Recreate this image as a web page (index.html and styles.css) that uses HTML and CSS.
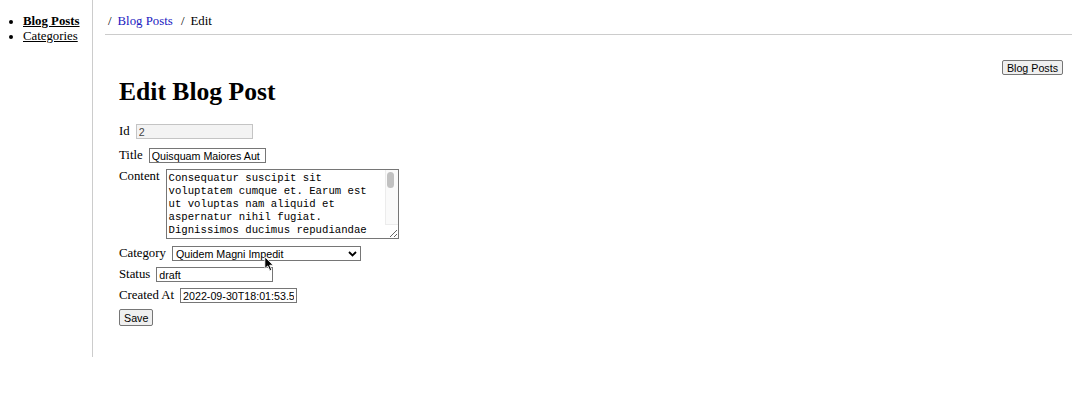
FILE: index.html
```html
<!DOCTYPE html>
<html lang="en">
<head>
    <meta charset="UTF-8">
    <meta name="viewport" content="width=device-width, initial-scale=1.0">
    <title>Edit Blog Post</title>
    <link rel="stylesheet" href="styles.css">
</head>
<body>
    <div class="layout">
        <aside class="sidebar">
            <ul class="nav">
                <li><a href="#" class="active">Blog Posts</a></li>
                <li><a href="#">Categories</a></li>
            </ul>
        </aside>

        <main class="main">
            <nav class="breadcrumb">
                <span class="crumb"><a href="#">Blog Posts</a></span>
                <span class="crumb">Edit</span>
            </nav>

            <div class="content">
                <button type="button" class="btn btn-back">Blog Posts</button>
                <h1>Edit Blog Post</h1>

                <form id="postForm">
                    <div class="field field-id">
                        <label for="id">Id</label><input type="text" id="id" name="id" class="input" value="2" disabled>
                    </div>

                    <div class="field">
                        <label for="title">Title</label><input type="text" id="title" name="title" class="input" value="Quisquam Maiores Aut">
                    </div>

                    <div class="field field-content">
                        <label for="content">Content</label><span class="textarea-wrap">
                            <textarea id="content" name="content" class="textarea">Consequatur suscipit sit voluptatem cumque et. Earum est ut voluptas nam aliquid et aspernatur nihil fugiat. Dignissimos ducimus repudiandae quia ut sequi. Nemo dolorem officiis ut rerum est aut. Voluptas et quo perferendis ipsam. Autem sint harum quasi est dolores in. Qui eos ut eveniet quia molestiae. Deleniti rerum quis vel facere. Sed et beatae quidem sunt omnis dolorem ut. Non aut iusto eius odit voluptatem officia. Repellat tempora eos saepe quaerat. Maxime sed fugit veniam. Labore commodi nisi at eum ratione.</textarea>
                            <span class="scroll-track"><span class="scroll-thumb"></span></span>
                        </span>
                    </div>

                    <div class="field">
                        <label for="category">Category</label><span class="select-wrap">
                            <select id="category" name="category" class="select">
                                <option>Quidem Magni Impedit</option>
                                <option>Voluptas Et Quo</option>
                            </select>
                            <svg class="chevron" width="9" height="6" viewBox="0 0 9 6"><path d="M1 1 L4.5 4.5 L8 1" fill="none" stroke="#000" stroke-width="1.8"/></svg>
                            <svg class="cursor" width="10" height="16" viewBox="0 0 12 19"><path d="M1 1 L1 15 L4.5 11.8 L7 17.5 L9.2 16.5 L6.8 11 L11 11 Z" fill="#000" stroke="#fff" stroke-width="1"/></svg>
                        </span>
                    </div>

                    <div class="field">
                        <label for="status">Status</label><input type="text" id="status" name="status" class="input" value="draft">
                    </div>

                    <div class="field">
                        <label for="createdAt">Created At</label><input type="text" id="createdAt" name="createdAt" class="input" value="2022-09-30T18:01:53.5">
                    </div>

                    <button type="submit" class="btn btn-save">Save</button>
                </form>
            </div>
        </main>
    </div>
</body>
</html>
```

FILE: styles.css
```css
body {
    margin: 0;
    font-family: "Liberation Serif", "Times New Roman", serif;
    font-size: 12.8px;
    color: #000;
    background: #fff;
}

.layout {
    display: flex;
}

.sidebar {
    width: 93px;
    flex-shrink: 0;
    box-sizing: border-box;
    border-right: 1px solid #ccc;
}

.nav {
    margin: 14px 0;
    padding-left: 23px;
}

.nav a {
    color: #000;
}

.nav a.active {
    font-weight: bold;
}

.main {
    flex: 1;
    margin-left: 12px;
}

.breadcrumb {
    padding: 14px 0 5px 3px;
    border-bottom: 1px solid #ccc;
}

.crumb::before {
    content: "/";
    margin-right: 6px;
}

.crumb + .crumb {
    margin-left: 5px;
}

.breadcrumb a {
    color: #2020c0;
    text-decoration: none;
}

.content {
    padding: 25px 9px 31px 14px;
}

h1 {
    font-size: 2em;
    margin: 17px 0;
}

.field {
    display: flex;
    align-items: center;
    margin-bottom: 6px;
}

.field-id {
    margin-bottom: 9px;
}

.field-content {
    align-items: flex-start;
    margin-bottom: 7px;
}

label {
    margin-right: 6px;
}

.input,
.select,
.btn {
    font-family: "Liberation Sans", Arial, sans-serif;
    font-size: 10.7px;
    color: #000;
}

.input {
    width: 117px;
    height: 15px;
    box-sizing: border-box;
    margin: 0;
    padding: 0 2px;
    border: 1px solid #767676;
    background: #fff;
}

.input:disabled {
    border-color: #c4c4c4;
    background: #f3f3f3;
    color: #444;
}

.textarea-wrap {
    position: relative;
    display: inline-block;
    line-height: 0;
}

.textarea {
    width: 233px;
    height: 70px;
    box-sizing: border-box;
    margin: 0;
    padding: 2px 15px 0 2px;
    border: 1px solid #767676;
    font-family: "Liberation Mono", "Courier New", monospace;
    font-size: 10.67px;
    line-height: 13px;
    overflow: hidden;
    resize: both;
}

.scroll-track {
    position: absolute;
    top: 1px;
    right: 1px;
    bottom: 14px;
    width: 13px;
    box-sizing: border-box;
    background: #fafafa;
    border-left: 1px solid #ececec;
    border-bottom: 1px solid #ececec;
}

.scroll-thumb {
    position: absolute;
    top: 2px;
    right: 4px;
    width: 7px;
    height: 16px;
    border-radius: 4px;
    background: #c1c1c1;
}

.select-wrap {
    position: relative;
    display: inline-block;
}

.select {
    display: block;
    width: 189px;
    height: 15px;
    box-sizing: border-box;
    margin: 0;
    padding: 0 3px;
    border: 1px solid #767676;
    border-radius: 0;
    background: #fff;
    appearance: none;
    -webkit-appearance: none;
}

.chevron {
    position: absolute;
    right: 4px;
    top: 5px;
    pointer-events: none;
}

.cursor {
    position: absolute;
    left: 92px;
    top: 10px;
    pointer-events: none;
}

.btn {
    box-sizing: border-box;
    padding: 0 4px;
    border: 1px solid #767676;
    border-radius: 2px;
    background: #efefef;
    cursor: pointer;
}

.btn-back {
    float: right;
    height: 15px;
}

.btn-save {
    height: 17px;
}
```
